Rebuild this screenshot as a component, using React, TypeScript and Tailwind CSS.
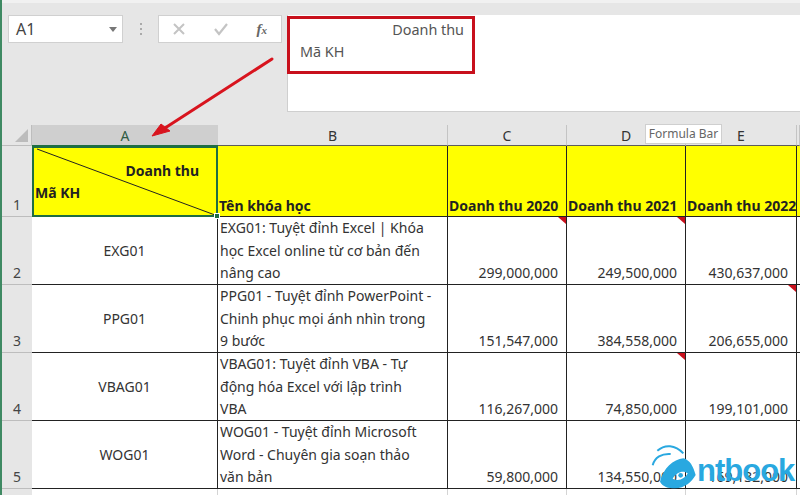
const FONT = "font-['Noto_Sans','Liberation_Sans',sans-serif]";

const ROWS = [
  {
    num: "2",
    code: "EXG01",
    name: ["EXG01: Tuyệt đỉnh Excel | Khóa", "học Excel online từ cơ bản đến", "nâng cao"],
    vals: ["299,000,000", "249,500,000", "430,637,000"],
    notes: [true, true, false],
  },
  {
    num: "3",
    code: "PPG01",
    name: ["PPG01 - Tuyệt đỉnh PowerPoint -", "Chinh phục mọi ánh nhìn trong", "9 bước"],
    vals: ["151,547,000", "384,558,000", "206,655,000"],
    notes: [false, false, true],
  },
  {
    num: "4",
    code: "VBAG01",
    name: ["VBAG01: Tuyệt đỉnh VBA - Tự", "động hóa Excel với lập trình", "VBA"],
    vals: ["116,267,000", "74,850,000", "199,101,000"],
    notes: [false, true, false],
  },
  {
    num: "5",
    code: "WOG01",
    name: ["WOG01 - Tuyệt đỉnh Microsoft", "Word - Chuyên gia soạn thảo", "văn bản"],
    vals: ["59,800,000", "134,550,000", "169,132,000"],
    notes: [false, false, false],
  },
];

const GRID = "grid grid-cols-[30px_186px_230px_119px_119px_111px_1fr]";

function ColHead({ label, active }: { label: string; active?: boolean }) {
  return (
    <div
      className={
        active
          ? "flex items-center justify-center border-b border-[#1f6e43] bg-[#cfcfcf] text-[14px] text-[#2f5d45]"
          : "flex items-center justify-center border-b border-black/60 border-r border-r-[#c4c4c4] bg-[#e6e6e6] text-[14px] text-[#333]"
      }
    >
      {label}
    </div>
  );
}

function HeaderCell({ label }: { label: string }) {
  return (
    <div className="flex items-end overflow-visible whitespace-nowrap border-b border-r border-[#222] bg-[#ffff00] pl-[1px] text-[14px] font-bold leading-[20px] text-[#222]">
      {label}
    </div>
  );
}

function Note() {
  return <div className="absolute right-0 top-0 size-0 border-l-[8px] border-t-[7px] border-l-transparent border-t-[#c8101c]" />;
}

export default function App() {
  return (
    <div className={`relative flex h-[495px] w-[800px] overflow-hidden bg-[#e6e6e6] ${FONT}`}>
      <div className="w-[2px] shrink-0 bg-[#3f8a63]" />

      <div className="flex min-w-0 flex-1 flex-col">
        {/* formula bar area */}
        <div className="flex h-[125px] shrink-0 flex-col">
          <div className="h-[3px] bg-[#f1f1f1]" />
          <div className="flex items-start pl-[6px] pt-[12px]">
            <div className="flex h-[28px] w-[115px] items-center justify-between border border-[#d0d0d0] bg-white pl-[7px] pr-[5px] text-[16px] text-[#444]">
              A1
              <span className="size-0 border-x-[4px] border-t-[5px] border-x-transparent border-t-[#777]" />
            </div>
            <div className="flex h-[28px] w-[35px] flex-col items-center justify-center gap-[3px]">
              <span className="size-[2px] bg-[#aaa]" />
              <span className="size-[2px] bg-[#aaa]" />
              <span className="size-[2px] bg-[#aaa]" />
            </div>
            <div className="flex h-[28px] w-[124px] items-center justify-between border border-[#d0d0d0] bg-white pl-[13px] pr-[14px]">
              <svg width="14" height="14" viewBox="0 0 14 14" fill="none" stroke="#c4c4c4" strokeWidth="2">
                <path d="M2 2l10 10M12 2L2 12" />
              </svg>
              <svg width="16" height="14" viewBox="0 0 16 14" fill="none" stroke="#c4c4c4" strokeWidth="2.2">
                <path d="M2 7l4 5 8-10" />
              </svg>
              <span className="font-['Liberation_Serif',serif] text-[15px] font-bold italic leading-none text-[#666]">
                f<span className="text-[11px]">x</span>
              </span>
            </div>
            <div className="ml-[5px] h-[97px] flex-1 border-l border-b border-[#cfcfcf] bg-white pl-[12px] text-[14.4px] leading-[22px] text-[#555]">
              <div className="w-[164px] pt-[4px] text-right">Doanh thu</div>
              <div>Mã KH</div>
            </div>
          </div>
        </div>

        {/* sheet */}
        <div className={`${GRID} grid-rows-[21px_71px] shrink-0`}>
          <div className="relative border-b border-r border-[#bdbdbd] bg-[#e6e6e6]">
            <div className="absolute bottom-[3px] right-[3px] size-0 border-b-[13px] border-l-[13px] border-b-[#bcbcbc] border-l-transparent" />
          </div>
          <ColHead label="A" active />
          <ColHead label="B" />
          <ColHead label="C" />
          <ColHead label="D" />
          <ColHead label="E" />
          <ColHead label="" />

          <div className="flex items-end justify-center border-b border-[#bdbdbd] bg-[#e6e6e6] text-[14px] leading-[22px] text-[#444]">1</div>
          <div className="relative flex flex-col border-2 border-[#1f6e43] bg-[#ffff00] pl-[1px] pr-[17px] pt-[12px] text-[14px] font-bold leading-[22px] text-[#222]">
            <svg className="absolute inset-0 size-full" viewBox="0 0 182 67" preserveAspectRatio="none">
              <path d="M3 1L181 67" stroke="#222" strokeWidth="1" />
            </svg>
            <div className="text-right">Doanh thu</div>
            <div>Mã KH</div>
            <div className="absolute -bottom-[4px] -right-[4px] z-10 size-[6px] border border-white bg-[#1f6e43]" />
          </div>
          <HeaderCell label="Tên khóa học" />
          <HeaderCell label="Doanh thu 2020" />
          <HeaderCell label="Doanh thu 2021" />
          <HeaderCell label="Doanh thu 2022" />
          <div className="border-b border-[#222] bg-[#ffff00]" />
        </div>

        {ROWS.map((r) => (
          <div key={r.num} className={`${GRID} h-[68px] shrink-0 bg-white text-[14px] text-[#333]`}>
            <div className="flex items-end justify-center border-b border-[#bdbdbd] bg-[#e6e6e6] leading-[22px] text-[#444]">{r.num}</div>
            <div className="flex items-center justify-center border-b border-r border-[#222]">{r.code}</div>
            <div className="overflow-hidden whitespace-nowrap border-b border-r border-[#222] pl-[2px] leading-[22.7px]">
              {r.name.map((line) => (
                <div key={line}>{line}</div>
              ))}
            </div>
            {r.vals.map((v, i) => (
              <div key={i} className="relative flex items-end justify-end border-b border-r border-[#222] pr-[8px] leading-[22px]">
                {v}
                {r.notes[i] && <Note />}
              </div>
            ))}
            <div className="border-b border-[#222]" />
          </div>
        ))}

        <div className={`${GRID} flex-1 bg-white`}>
          <div className="bg-[#e6e6e6]" />
          <div className="border-r border-[#d4d4d4]" />
          <div className="border-r border-[#d4d4d4]" />
          <div className="border-r border-[#d4d4d4]" />
          <div className="border-r border-[#d4d4d4]" />
          <div className="border-r border-[#d4d4d4]" />
        </div>
      </div>

      {/* callouts over the screenshot */}
      <div className="absolute left-[287px] top-[16px] h-[58px] w-[188px] border-[3px] border-[#c8101c]" />
      <svg className="absolute left-0 top-0" width="800" height="160" fill="none">
        <path d="M272 59L165 128" stroke="#d8141e" strokeWidth="3" strokeLinecap="round" />
        <path d="M152 136L161 124L170 131Z" fill="#d8141e" stroke="#d8141e" strokeWidth="1" />
      </svg>
      <div className="absolute left-[645px] top-[124px] flex h-[20px] w-[77px] items-center justify-center border border-[#cfcfcf] bg-white text-[12px] text-[#666]">
        Formula Bar
      </div>
      <div className="absolute left-[650px] top-[440px] flex h-[50px] items-start">
        <svg width="60" height="50" viewBox="0 0 180 150" fill="none">
          <path d="M22 32C45 12 75 14 100 40" stroke="#29a8e0" strokeWidth="6" />
          <path d="M8 76C14 52 35 40 62 42" stroke="#29a8e0" strokeWidth="6" />
          <path
            fillRule="evenodd"
            d="M30 125C40 85 70 58 100 55C120 60 130 80 137 105C125 125 105 145 75 145C55 145 38 140 30 125ZM68 116C80 96 100 90 113 100C105 116 85 126 68 116Z"
            fill="#29a8e0"
          />
          <circle cx="92" cy="106" r="7" fill="#29a8e0" />
        </svg>
        <span className="-ml-[13px] mt-[13px] font-['Liberation_Sans',sans-serif] text-[31px] font-bold leading-[35px] tracking-[-1px] text-[#29a8e0]">
          ntbook
        </span>
      </div>
    </div>
  );
}
